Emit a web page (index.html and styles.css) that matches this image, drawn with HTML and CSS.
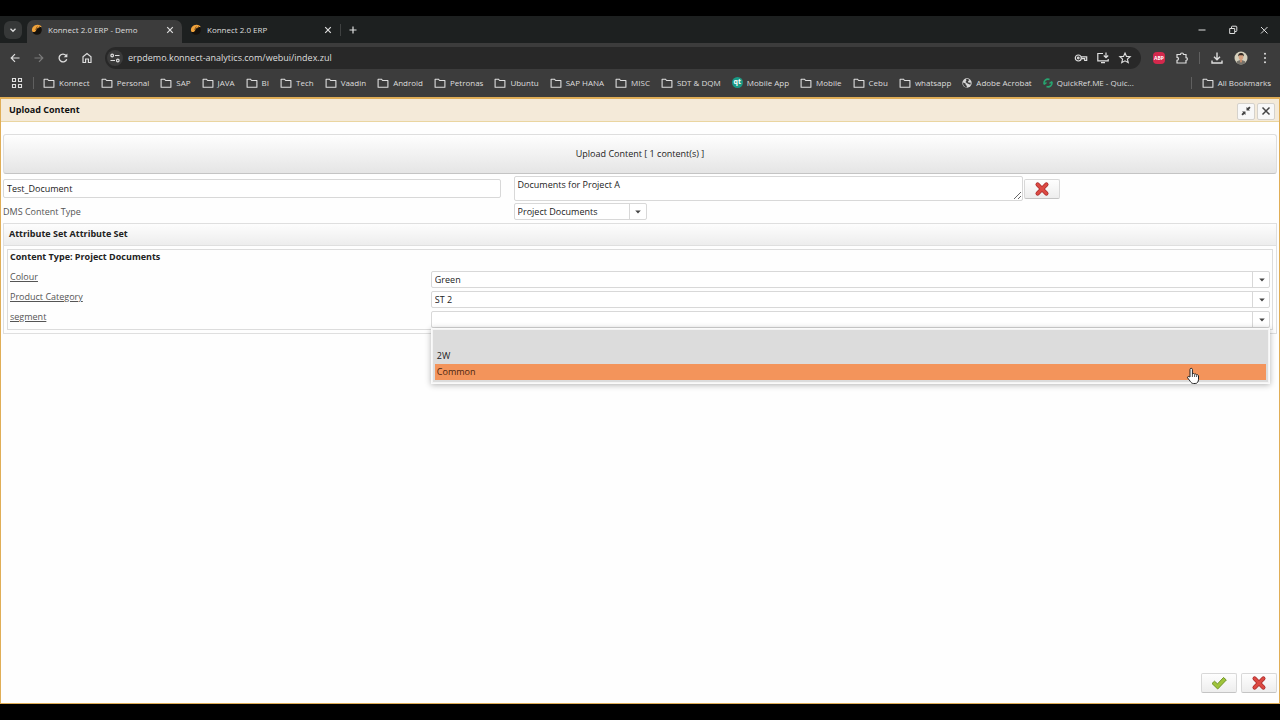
FILE: index.html
```html
<!DOCTYPE html>
<html lang="en">
<head>
<meta charset="utf-8">
<title>Konnect 2.0 ERP - Demo</title>
<link rel="stylesheet" href="styles.css">
</head>
<body>
<svg class="defs" aria-hidden="true">
  <symbol id="folder" viewBox="0 0 12 12"><path d="M1.1 2.2h3.3l1.2 1.3h5.3v6.7H1.1z" fill="none" stroke="currentColor" stroke-width="1.1" stroke-linejoin="round"/></symbol>
  <symbol id="flame" viewBox="0 0 12 12"><circle cx="6" cy="6" r="4.8" fill="#15110c"/><path d="M1.2 7.6C0 3.8 3 1 6.4.8 8.500.7 10.300 1.700 10.800 3.200 9.500 2.600 8.200 3 7.500 4.200 6.700 3.800 5.600 4.600 5.300 6 4.800 7.800 3 8.800 1.200 7.600z" fill="#f0a33c"/><path d="M6.300 2.500 4.600 5.800M8.600 2.300 7.500 4.200" stroke="#5b3510" stroke-width=".7"/></symbol>
  <symbol id="close" viewBox="0 0 10 10"><path d="M1.500 1.500l7 7m0-7l-7 7" fill="none" stroke="currentColor" stroke-width="1.500"/></symbol>
  <symbol id="cross" viewBox="0 0 16 16"><path d="M3.600 3.600l8.800 8.800m0-8.800l-8.800 8.800" stroke="#a92b2b" stroke-width="4.200" stroke-linecap="round"/><path d="M3.600 3.600l8.800 8.800m0-8.800l-8.800 8.800" stroke="#dc4a43" stroke-width="2.800" stroke-linecap="round"/></symbol>
  <symbol id="tick" viewBox="0 0 16 16"><path d="M1 8.500l2.500-2.300 3 2.700L12.500 2.500 15.300 5 6.700 14z" fill="#9fc43a" stroke="#6f9427" stroke-width="1" stroke-linejoin="round"/></symbol>
  <symbol id="caret" viewBox="0 0 8 8"><path d="M1.200 2.500h5.600L4 5.500z" fill="#444"/></symbol>
</svg>

<header class="browser">
  <div class="tabstrip">
    <button class="tab-search" aria-label="Search tabs"><svg viewBox="0 0 10 10" class="i10"><path d="M2.500 3.800L5 6.300l2.500-2.500" fill="none" stroke="currentColor" stroke-width="1.300"/></svg></button>
    <div class="tab tab-active"><svg class="i12"><use href="#flame"/></svg><span class="tab-title">Konnect 2.0 ERP - Demo</span><button class="plain" aria-label="Close tab"><svg class="i8"><use href="#close"/></svg></button></div>
    <div class="tab"><svg class="i12"><use href="#flame"/></svg><span class="tab-title">Konnect 2.0 ERP</span><button class="plain" aria-label="Close tab"><svg class="i8"><use href="#close"/></svg></button></div>
    <span class="divider tab-divider"></span>
    <button class="plain new-tab" aria-label="New tab"><svg class="i10" viewBox="0 0 10 10"><path d="M5 1.500v7M1.500 5h7" stroke="currentColor" stroke-width="1.200"/></svg></button>
    <div class="window-controls">
      <button class="plain" aria-label="Minimize"><svg class="i10" viewBox="0 0 10 10"><path d="M1.500 5h7" stroke="currentColor"/></svg></button>
      <button class="plain" aria-label="Restore"><svg class="i10" viewBox="0 0 10 10"><path d="M3.500 3V2a.8.8 0 0 1 .8-.8H8a.8.8 0 0 1 .8.8v3.700a.8.8 0 0 1-.8.8H7M1.700 3.500h5v5h-5z" fill="none" stroke="currentColor"/></svg></button>
      <button class="plain" aria-label="Close window"><svg class="i10" viewBox="0 0 10 10"><path d="M2 2l6.500 6.500m0-6.500L2 8.500" stroke="currentColor"/></svg></button>
    </div>
  </div>

  <div class="toolbar">
    <div class="nav">
      <button class="plain" aria-label="Back"><svg class="i12" viewBox="0 0 12 12"><path d="M10.500 6h-8M6 2.200L2.200 6 6 9.800" fill="none" stroke="currentColor" stroke-width="1.200"/></svg></button>
      <button class="plain dim" aria-label="Forward"><svg class="i12" viewBox="0 0 12 12"><path d="M1.500 6h8M6 2.200L9.800 6 6 9.800" fill="none" stroke="currentColor" stroke-width="1.200"/></svg></button>
      <button class="plain" aria-label="Reload"><svg class="i12" viewBox="0 0 12 12"><path d="M9.700 7.200A3.900 3.900 0 1 1 9 3.500" fill="none" stroke="currentColor" stroke-width="1.300"/><path d="M10.400 1.500v3.700H6.700z" fill="currentColor"/></svg></button>
      <button class="plain" aria-label="Home"><svg class="i12" viewBox="0 0 12 12"><path d="M2 4.800L6 1.600l4 3.200v5.700H7.400V7H4.600v3.500H2z" fill="none" stroke="currentColor" stroke-width="1.200"/></svg></button>
    </div>
    <div class="omnibox">
      <button class="plain site-info" aria-label="Site information"><svg class="i12" viewBox="0 0 12 12" fill="none" stroke="currentColor" stroke-width="1.200"><circle cx="3.200" cy="3.500" r="1.300"/><path d="M6 3.500h4.500M1.500 8.500H6"/><circle cx="8.800" cy="8.500" r="1.300"/></svg></button>
      <input class="url" type="text" aria-label="Address" value="erpdemo.konnect-analytics.com/webui/index.zul">
      <button class="plain" aria-label="Passwords"><svg class="i14" viewBox="0 0 14 14" fill="none" stroke="currentColor" stroke-width="1.200"><circle cx="4.300" cy="7" r="3"/><circle cx="4.300" cy="7" r=".8"/><path d="M7 5.800h5.700v3.700h-2V7.700H7.300"/></svg></button>
      <button class="plain" aria-label="Install app"><svg class="i14" viewBox="0 0 14 14" fill="none" stroke="currentColor" stroke-width="1.200"><path d="M7 2.500H1.800v7.300h10.400V8M5 11.700h4M10 1.500v5M7.800 4.500L10 6.700l2.200-2.200"/></svg></button>
      <button class="plain" aria-label="Bookmark this tab"><svg class="i14" viewBox="0 0 14 14"><path d="M7 2l1.500 3.400 3.700.3-2.800 2.400.9 3.600L7 9.800l-3.300 1.900.9-3.600-2.800-2.400 3.700-.3z" fill="none" stroke="currentColor" stroke-width="1.100"/></svg></button>
    </div>
    <div class="extensions">
      <button class="plain abp" aria-label="Adblock Plus">ABP</button>
      <button class="plain" aria-label="Extensions"><svg class="i14" viewBox="0 0 14 14"><path d="M2 3.500h3.500a1.500 1.500 0 0 1 3 0H11v3.200a1.400 1.400 0 0 1 0 2.800V12H2V9.300a1.500 1.500 0 0 0 0-3z" fill="none" stroke="currentColor" stroke-width="1.200"/></svg></button>
      <span class="divider"></span>
      <button class="plain" aria-label="Downloads"><svg class="i14" viewBox="0 0 14 14" fill="none" stroke="currentColor" stroke-width="1.400"><path d="M7 1.500v7M4 5.700l3 3 3-3M2 9.500v2.500h10V9.500"/></svg></button>
      <button class="plain" aria-label="Profile"><svg class="i14" viewBox="0 0 14 14"><circle cx="7" cy="7" r="6.500" fill="#d5d0bd"/><path d="M2.300 11.500C3 9.500 5 9.200 7 9.200s4 .3 4.700 2.300A6.500 6.500 0 0 1 2.300 11.500z" fill="#76736b"/><path d="M6 8h2v2.500L7 12l-1-1.500z" fill="#c58c6c"/><ellipse cx="7" cy="6" rx="2.300" ry="3" fill="#d6a17f"/><path d="M4.300 5.500C3.800 2.800 5.500 1.800 7.200 1.900c2 0 3 1.400 2.500 3.600L8.800 4.200H5.300z" fill="#332921"/></svg></button>
      <button class="plain" aria-label="Menu"><svg class="i14" viewBox="0 0 14 14" fill="currentColor"><circle cx="7" cy="2.800" r="1"/><circle cx="7" cy="7" r="1"/><circle cx="7" cy="11.200" r="1"/></svg></button>
    </div>
  </div>

  <nav class="bookmarks" aria-label="Bookmarks">
    <button class="plain apps" aria-label="Apps"><svg class="i12" viewBox="0 0 12 12" fill="none" stroke="currentColor" stroke-width="1.100"><path d="M1.500 1.500h3v3h-3zM7.500 1.500h3v3h-3zM1.500 7.500h3v3h-3zM7.500 7.500h3v3h-3z"/></svg></button>
    <span class="divider"></span>
    <div class="bookmark-list">
      <a class="bm" href="#"><svg class="i12"><use href="#folder"/></svg>Konnect</a>
      <a class="bm" href="#"><svg class="i12"><use href="#folder"/></svg>Personal</a>
      <a class="bm" href="#"><svg class="i12"><use href="#folder"/></svg>SAP</a>
      <a class="bm" href="#"><svg class="i12"><use href="#folder"/></svg>JAVA</a>
      <a class="bm" href="#"><svg class="i12"><use href="#folder"/></svg>BI</a>
      <a class="bm" href="#"><svg class="i12"><use href="#folder"/></svg>Tech</a>
      <a class="bm" href="#"><svg class="i12"><use href="#folder"/></svg>Vaadin</a>
      <a class="bm" href="#"><svg class="i12"><use href="#folder"/></svg>Android</a>
      <a class="bm" href="#"><svg class="i12"><use href="#folder"/></svg>Petronas</a>
      <a class="bm" href="#"><svg class="i12"><use href="#folder"/></svg>Ubuntu</a>
      <a class="bm" href="#"><svg class="i12"><use href="#folder"/></svg>SAP HANA</a>
      <a class="bm" href="#"><svg class="i12"><use href="#folder"/></svg>MISC</a>
      <a class="bm" href="#"><svg class="i12"><use href="#folder"/></svg>SDT &amp; DQM</a>
      <a class="bm bm-site" href="#"><span class="qt">qt</span>Mobile App</a>
      <a class="bm" href="#"><svg class="i12"><use href="#folder"/></svg>Mobile</a>
      <a class="bm" href="#"><svg class="i12"><use href="#folder"/></svg>Cebu</a>
      <a class="bm" href="#"><svg class="i12"><use href="#folder"/></svg>whatsapp</a>
      <a class="bm bm-site" href="#"><svg class="i10" viewBox="0 0 10 10"><circle cx="5" cy="5" r="4.700" fill="#d6d6d6"/><path d="M1 4.500l2.500 1 .3 1.500 1 .8V9.500C2.500 9.300.8 7.500 1 4.500zM4 .9l2 .2 1.500 1L6 3.300l.3 1.200 2.500.3-.5 2L6.800 6 5 5.200 3.500 4l.9-1.500z" fill="#3c3c3c"/></svg>Adobe Acrobat</a>
      <a class="bm bm-site" href="#"><svg class="i10" viewBox="0 0 10 10" fill="none" stroke="#27a570" stroke-width="1.600"><path d="M1.200 6.200A3.900 3.900 0 0 1 6.500 1.500M8.800 3.800A3.900 3.900 0 0 1 3.500 8.500M1 6.500l2.500-2M9 3.500l-2.500 2"/></svg>QuickRef.ME - Quic...</a>
    </div>
    <span class="divider"></span>
    <a class="bm all" href="#"><svg class="i12"><use href="#folder"/></svg>All Bookmarks</a>
  </nav>
</header>

<main class="dialog">
  <div class="dialog-head">
    <h1 class="dialog-title">Upload Content</h1>
    <div class="dialog-tools">
      <button class="tool" aria-label="Restore dialog"><svg class="i10" viewBox="0 0 10 10"><path d="M5.500 1v3.500H9L7.900 3.400 9.600 1.700 8.300.4 6.600 2.100zM4.500 9V5.500H1l1.100 1.100L.4 8.300l1.300 1.300 1.700-1.700z" fill="#444"/></svg></button>
      <button class="tool" aria-label="Close dialog"><svg class="i10"><use href="#close"/></svg></button>
    </div>
  </div>

  <form class="content">
    <button type="button" class="upload">Upload Content [ 1 content(s) ]</button>

    <div class="fields">
      <input class="box name" type="text" aria-label="Name" value="Test_Document">
      <textarea class="box description" aria-label="Description" rows="1">Documents for Project A</textarea>
      <button type="button" class="action" aria-label="Remove"><svg class="i16"><use href="#cross"/></svg></button>
      <label class="type-label" for="type">DMS Content Type</label>
      <div class="combo type-combo"><select id="type"><option>Project Documents</option></select><span class="combo-arrow"><svg class="i8"><use href="#caret"/></svg></span></div>
    </div>

    <section class="group">
      <h2 class="group-title">Attribute Set Attribute Set</h2>
      <div class="group-body">
        <h3 class="type-title">Content Type: Project Documents</h3>
        <div class="attr"><label for="colour">Colour</label><div class="combo"><select id="colour"><option>Green</option></select><span class="combo-arrow"><svg class="i8"><use href="#caret"/></svg></span></div></div>
        <div class="attr"><label for="category">Product Category</label><div class="combo"><select id="category"><option>ST 2</option></select><span class="combo-arrow"><svg class="i8"><use href="#caret"/></svg></span></div></div>
        <div class="attr"><label for="segment">segment</label>
          <div class="combo-open">
            <div class="combo"><select id="segment"><option></option><option>2W</option><option>Common</option></select><span class="combo-arrow"><svg class="i8"><use href="#caret"/></svg></span></div>
            <ul class="popup" role="listbox" aria-label="segment">
              <li role="option" aria-selected="false"></li>
              <li role="option" aria-selected="false">2W</li>
              <li class="hover" role="option" aria-selected="true">Common
                <svg class="pointer" viewBox="0 0 14 18"><path d="M4 10V2.500a1.200 1.200 0 0 1 2.400 0V7c.6-.8 1.800-.6 2.200.2.700-.5 1.700-.2 2 .6.9-.4 1.900.2 1.900 1.200v3.300c0 2.500-1.200 4.200-3.300 4.200H7.500c-1.500 0-2.400-.8-3.100-2L1.700 11c-.6-1 .5-2 1.500-1.300z" fill="#fff" stroke="#222" stroke-width="1" stroke-linejoin="round"/><path d="M6.400 7v3M8.600 7.500V10M10.600 8.200V10" stroke="#222" stroke-width=".8"/></svg>
              </li>
            </ul>
          </div>
        </div>
      </div>
    </section>

    <div class="footer">
      <button type="button" class="action" aria-label="OK"><svg class="i16"><use href="#tick"/></svg></button>
      <button type="button" class="action" aria-label="Cancel"><svg class="i16"><use href="#cross"/></svg></button>
    </div>
  </form>
</main>
</body>
</html>
```
FILE: styles.css
```css
* { box-sizing: border-box; }

body {
  margin: 0;
  min-height: 100vh;
  padding: 16px 0;
  display: flex;
  flex-direction: column;
  background: #000;
  font-family: "Open Sans", "Noto Sans", sans-serif;
  font-size: 9px;
  line-height: 12px;
  color: #222;
}

button, input, select, textarea { font: inherit; color: inherit; margin: 0; }
svg { display: block; flex: none; }
.defs { position: absolute; width: 0; height: 0; }
.i8 { width: 8px; height: 8px; }
.i10 { width: 10px; height: 10px; }
.i12 { width: 12px; height: 12px; }
.i14 { width: 14px; height: 14px; }
.i16 { width: 16px; height: 16px; }

.plain {
  display: flex;
  align-items: center;
  justify-content: center;
  padding: 0;
  border: 0;
  background: none;
}
.dim { color: #7b7b7b; }
.divider { width: 1px; height: 12px; background: #606060; flex: none; }

/* Browser chrome */
.browser { background: #3c3c3c; color: #dedede; }

.tabstrip {
  display: flex;
  align-items: center;
  height: 27px;
  padding-left: 4px;
  background: #1d2020;
}
.tab-search {
  display: flex;
  align-items: center;
  justify-content: center;
  width: 18px;
  height: 18px;
  padding: 0;
  border: 0;
  border-radius: 6px;
  background: #363838;
}
.tab {
  display: flex;
  align-items: center;
  gap: 5px;
  width: 158px;
  height: 23px;
  align-self: flex-end;
  padding: 0 8px 3px;
  font-size: 8px;
}
.tab-active {
  width: 155px;
  margin-left: 5px;
  padding-left: 4px;
  border-radius: 7px 7px 0 0;
  background: #3c3c3c;
}
.tab-title { flex: 1; }
.tab-divider { background: #3f4141; }
.new-tab { margin-left: 7px; }
.window-controls { display: flex; gap: 21px; margin-left: auto; padding-right: 11px; }

.toolbar { display: flex; align-items: center; height: 30px; padding: 0 8px 0 9px; }
.nav { display: flex; gap: 12px; margin-right: 12px; }
.omnibox {
  flex: 1;
  display: flex;
  align-items: center;
  gap: 8px;
  height: 22px;
  padding: 0 9px 0 2px;
  border-radius: 11px;
  background: #282828;
}
.site-info { width: 16px; height: 16px; border-radius: 8px; background: #3b3b3b; }
.url { flex: 1; margin-left: -3px; padding: 0; border: 0; background: none; }
.extensions { display: flex; align-items: center; gap: 10px; margin-left: 12px; }
.abp {
  width: 12px;
  height: 12px;
  border-radius: 4px;
  background: #d4284c;
  color: #fff;
  font-size: 5px;
  font-weight: 700;
}

.bookmarks { display: flex; align-items: center; height: 24px; padding: 0 9px 5px 11px; }
.apps { margin-right: 10px; }
.bookmark-list { flex: 1; display: flex; gap: 11px; margin-left: 9px; min-width: 0; overflow: hidden; }
.bm {
  display: flex;
  align-items: center;
  gap: 4px;
  color: inherit;
  text-decoration: none;
  white-space: nowrap;
  font-size: 8px;
}
.qt {
  width: 11px;
  height: 11px;
  border-radius: 6px;
  background: #1a9a85;
  color: #fff;
  font-size: 7px;
  font-weight: 700;
  line-height: 10px;
  text-align: center;
}
.all { margin-left: 10px; }

/* Dialog */
.dialog {
  flex: 1;
  display: flex;
  flex-direction: column;
  border: 1px solid #e0ae57;
  border-top-width: 2px;
  background: #fefefe;
}
.dialog-head {
  display: flex;
  align-items: center;
  justify-content: space-between;
  height: 23px;
  padding: 0 4px 0 8px;
  border-bottom: 1px solid #ead5a0;
  background: #f4ead9;
}
.dialog-title { margin: 0; padding-bottom: 1px; font-size: 9px; color: #111; }
.dialog-tools { display: flex; gap: 2px; padding-top: 2px; }
.tool {
  display: flex;
  align-items: center;
  justify-content: center;
  width: 18px;
  height: 17px;
  padding: 0;
  border: 1px solid #d5d2cc;
  border-radius: 2px;
  background: #f8f8f8;
  color: #444;
}

.content { flex: 1; display: flex; flex-direction: column; padding: 12px 2px 10px; }
.upload {
  height: 40px;
  border: 1px solid #dedede;
  border-bottom-color: #c4c4c4;
  border-radius: 3px;
  background: linear-gradient(#fefefe, #e5e5e5);
}

.fields {
  display: grid;
  grid-template-columns: 40% 40% auto;
  column-gap: 1px;
  row-gap: 2px;
  align-items: center;
  justify-content: start;
  padding: 2px 0 3px;
}
.box {
  border: 1px solid #d8d8d8;
  border-radius: 2px;
  padding: 0 3px;
  background: #fff;
}
.name { height: 19px; margin-right: 12px; }
.description { height: 25px; padding-top: 2px; resize: vertical; }
.action {
  display: flex;
  align-items: center;
  justify-content: center;
  width: 36px;
  height: 20px;
  padding: 0;
  border: 1px solid #d8d8d8;
  border-bottom-color: #c4c4c4;
  border-radius: 2px;
  background: linear-gradient(#fefefe, #ededed);
}
.type-label { color: #555; }

.combo { display: grid; grid-template-columns: 1fr 18px; height: 17px; }
.combo select {
  grid-area: 1 / 1 / 2 / 3;
  appearance: none;
  width: 100%;
  padding: 0 20px 0 3px;
  border: 1px solid #d8d8d8;
  border-radius: 2px;
  background: #fff;
}
.combo-arrow {
  grid-area: 1 / 2;
  z-index: 1;
  display: flex;
  align-items: center;
  justify-content: center;
  border-left: 1px solid #d8d8d8;
  pointer-events: none;
}
.type-combo { width: 133px; }

.group { border: 1px solid #dfdfdf; padding: 0 3px 3px; }
.group-title {
  margin: 0 -3px 3px;
  padding: 4px 5px 5px;
  border-bottom: 1px solid #dfdfdf;
  background: linear-gradient(#fdfdfd, #ededed);
  font-size: 9px;
}
.group-body { border: 1px solid #dcdcdc; padding: 1px 2px; }
.type-title { margin: 0; padding-bottom: 7px; font-size: 9px; }
.attr {
  display: grid;
  grid-template-columns: 33.4% 1fr;
  align-items: start;
  height: 20px;
}
.attr:last-child { height: 18px; }
.attr label { justify-self: start; padding-top: 1px; color: #555; text-decoration: underline; }
.attr .combo { margin-top: 1px; }

.combo-open { position: relative; }
.popup {
  position: absolute;
  z-index: 2;
  top: 100%;
  left: 1px;
  right: 1px;
  margin: 1px 0 0;
  padding: 2px;
  border: 1px solid #f4f4f4;
  background: #dcdcdc;
  outline: 1px solid #fafafa;
  box-shadow: 0 1px 6px 1px rgba(0, 0, 0, 0.3);
  list-style: none;
}
.popup li { height: 16px; padding: 2px 2px; }
.hover { position: relative; background: #f3945b; color: #4a2510; }
.pointer { position: absolute; top: 3px; right: 66px; width: 14px; height: 18px; }

.footer { display: flex; justify-content: flex-end; gap: 4px; margin-top: auto; }
```
